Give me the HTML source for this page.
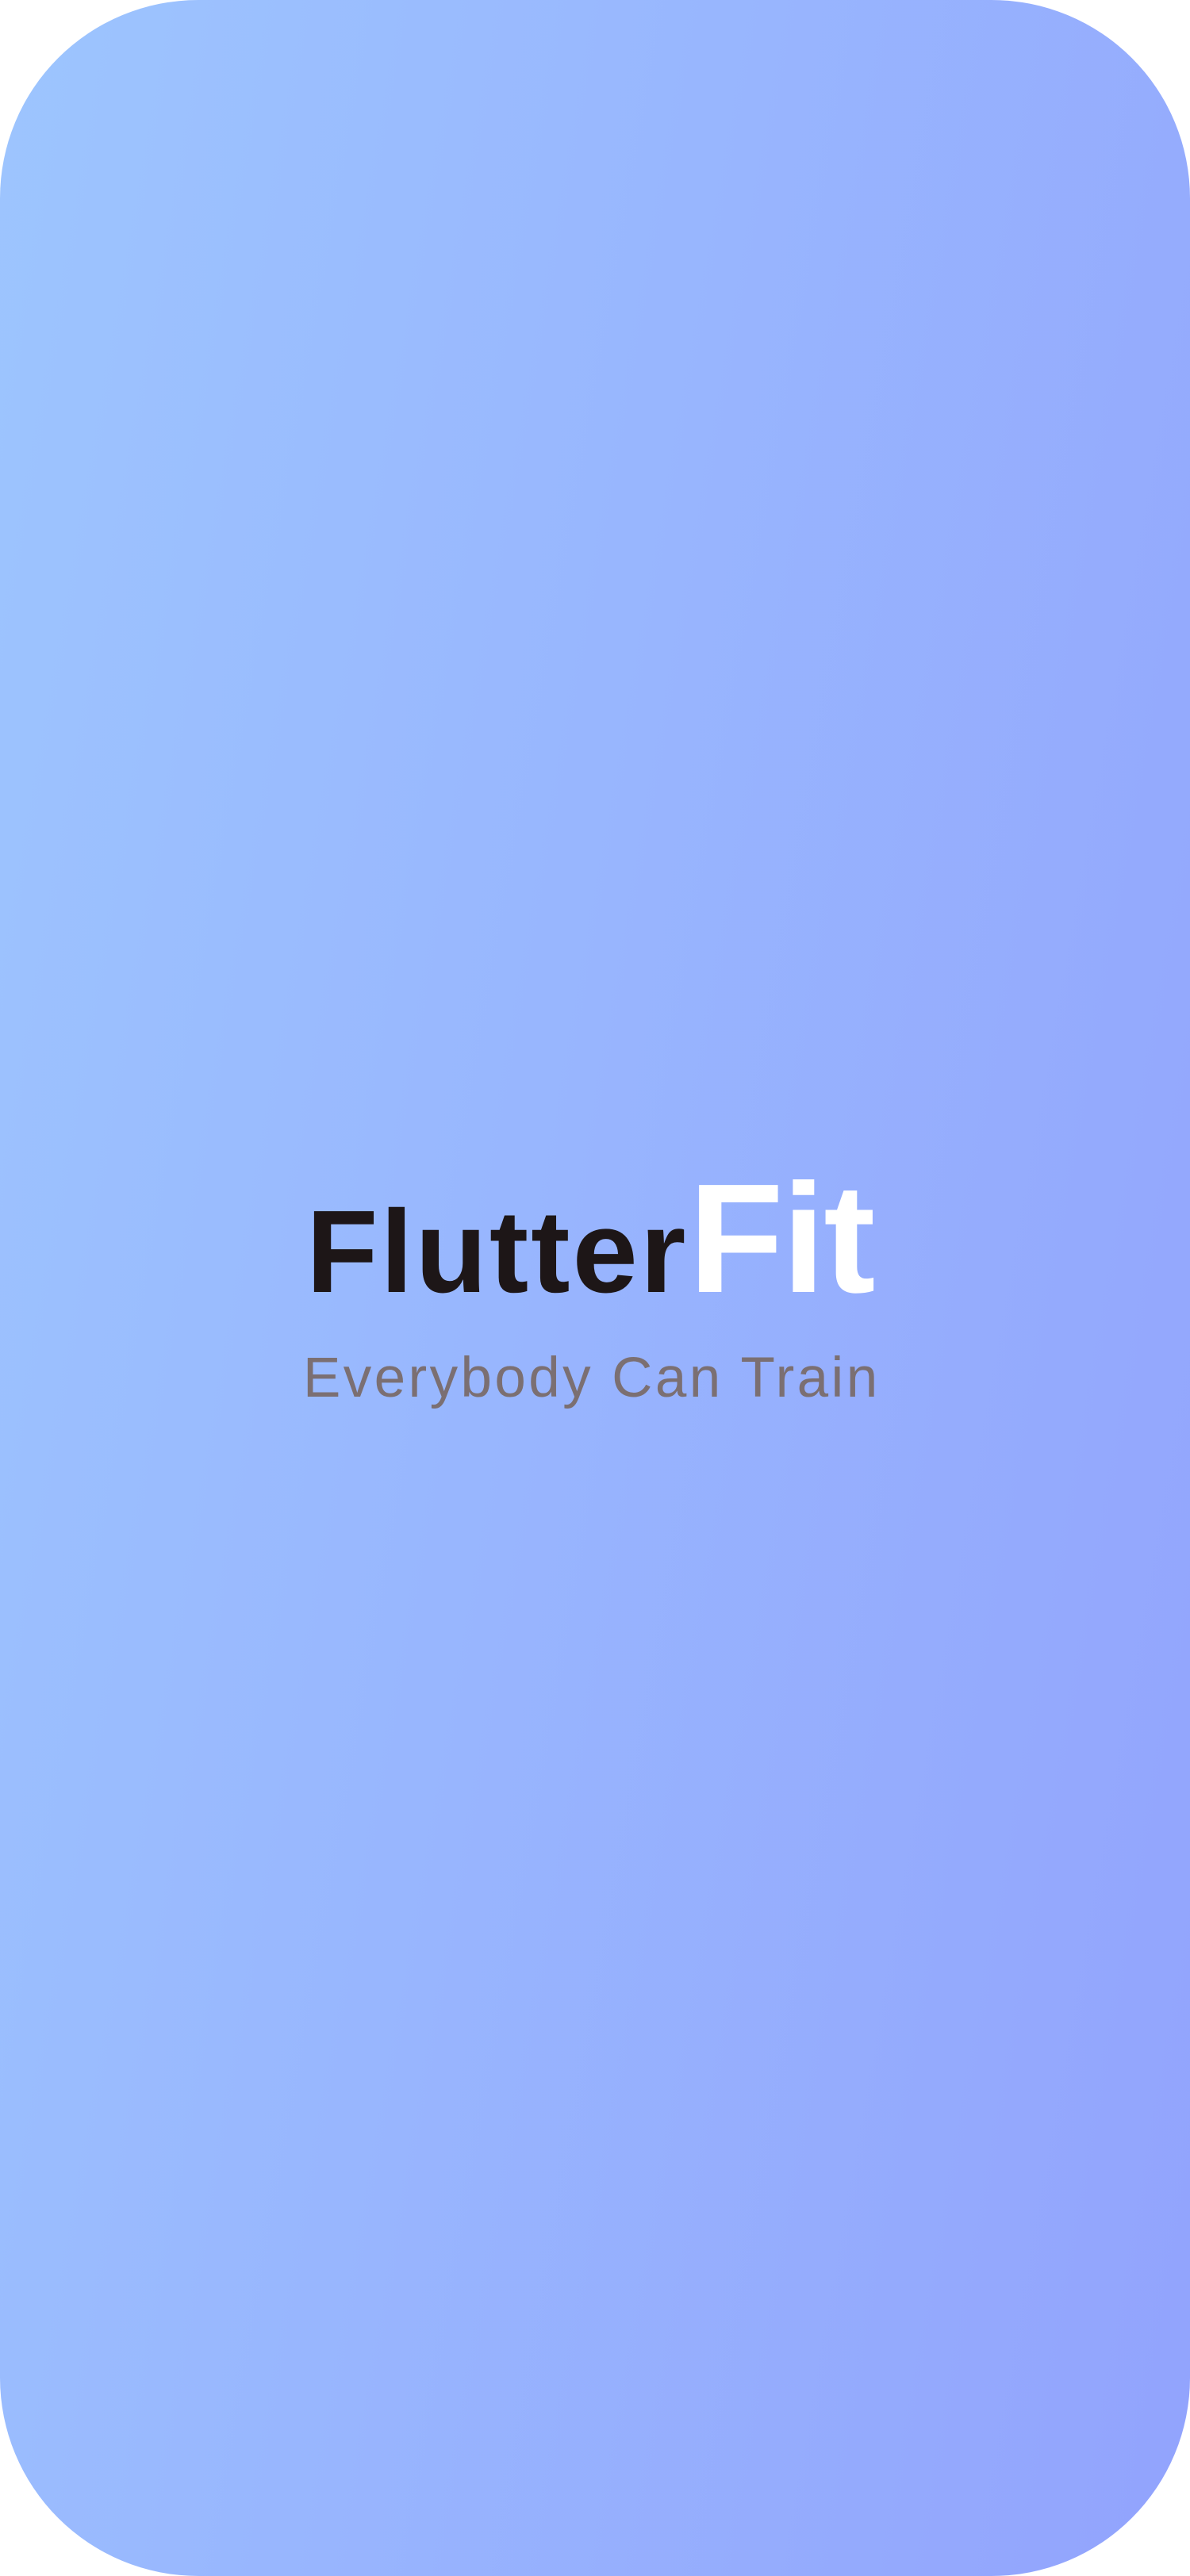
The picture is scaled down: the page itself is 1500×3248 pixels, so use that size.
<!DOCTYPE html>
<html><head><meta charset="utf-8"><style>
html,body{margin:0;padding:0;width:1500px;height:3248px;background:#fff;overflow:hidden}
.card{position:absolute;left:0;top:0;width:1500px;height:3248px;border-radius:250px;background:linear-gradient(100deg,#9dc5fe 0%,#92a3fd 100%);}
.t{position:absolute;font-family:"Liberation Sans",sans-serif;white-space:nowrap;line-height:1}
</style></head><body>
<div class="card"></div>
<div class="t" style="left:386px;top:1505px;font-size:148px;font-weight:bold;color:#1d1617;letter-spacing:3px">Flutter</div>
<div class="t" style="left:868px;top:1464px;font-size:196px;font-weight:bold;color:#fff;letter-spacing:-2px">Fit</div>
<div class="t" style="left:382px;top:1702px;font-size:71px;color:#7b6f72;letter-spacing:3.4px">Everybody Can Train</div>
</body></html>
